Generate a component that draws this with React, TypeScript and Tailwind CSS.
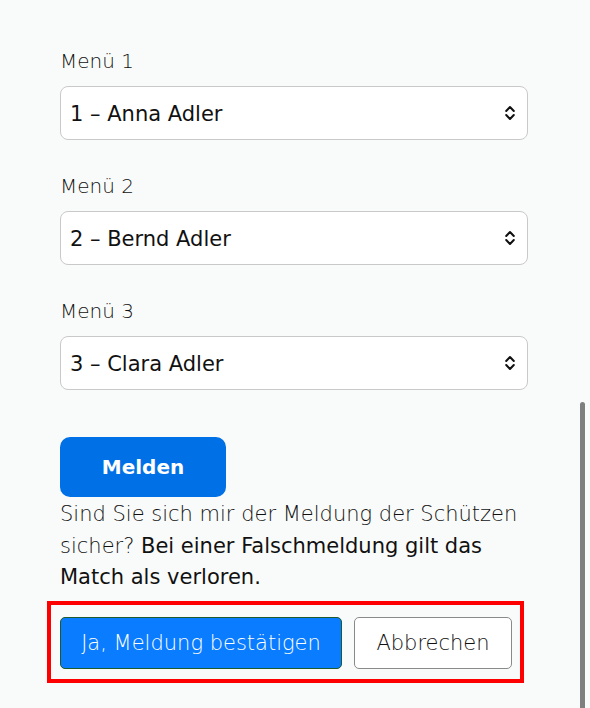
import React from 'react';

interface MenuFieldProps {
  label: string;
  options: string[];
  value: string;
  first?: boolean;
}

const ChevronUpDown = () => (
  <svg width="10" height="18" viewBox="0 0 10 18" fill="none" stroke="#111" strokeWidth="2" strokeLinecap="round" strokeLinejoin="round">
    <path d="M1.2 7 5 3l3.8 4" />
    <path d="M1.2 11 5 15l3.8-4" />
  </svg>
);

// One labelled shooter dropdown
const MenuField: React.FC<MenuFieldProps> = ({ label, options, value, first = false }) => (
  <div className={first ? '' : 'mt-[29px]'}>
    <label className="block pt-[2px] text-[20px] leading-[30px] font-extralight text-[#111] mb-[10px]">{label}</label>
    <div className="relative">
      <select
        defaultValue={value}
        className="w-full h-[54px] appearance-none rounded-lg border border-[#c9c9c9] bg-white pl-[9px] pr-10 pt-[4px] text-[21px] text-[#111] outline-none"
      >
        {options.map(o => (
          <option key={o} value={o}>{o}</option>
        ))}
      </select>
      <span className="pointer-events-none absolute right-[13px] top-1/2 -translate-y-1/2 flex">
        <ChevronUpDown />
      </span>
    </div>
  </div>
);

const shooters = ['1 – Anna Adler', '2 – Bernd Adler', '3 – Clara Adler'];

export default function App() {
  return (
    <div className="relative min-h-screen bg-[#f9fbfa] font-['DejaVu_Sans',sans-serif] text-[#1a1a1a] overflow-hidden">
      <div className="w-[468px] ml-[60px] pt-[44px]">
        {shooters.map((s, i) => (
          <MenuField key={s} label={`Menü ${i + 1}`} options={shooters} value={s} first={i === 0} />
        ))}

        <button className="mt-[47px] w-[166px] h-[60px] rounded-[10px] bg-[#0070e6] text-white text-[20px] font-bold">
          Melden
        </button>

        <p className="mt-[2px] text-[21px] leading-[31.5px] font-extralight text-[#111]">
          Sind Sie sich mir der Meldung der Schützen
          <br />
          sicher? <span className="font-normal">Bei einer Falschmeldung gilt das</span>
          <br />
          <span className="font-normal">Match als verloren.</span>
        </p>

        <div className="mt-[7px] -ml-[13px] w-[477px] border-4 border-[#ff0000] pl-[9px] pt-3 pb-[10px] flex gap-3">
          <button className="w-[282px] h-[52px] rounded-[5px] bg-[#0a7cff] border border-[#1d5a2c] pt-[3px] text-white text-[21px] font-extralight">
            Ja, Meldung bestätigen
          </button>
          <button className="w-[158px] h-[52px] rounded-[5px] bg-white border border-[#8a8a8a] pt-[3px] text-[#111] text-[21px] font-extralight">
            Abbrechen
          </button>
        </div>
      </div>

      {/* overlay scrollbar thumb */}
      <div className="absolute right-[5px] top-[402px] bottom-0 w-[5px] rounded-t-full bg-[#7f7f7f]" />
    </div>
  );
}
